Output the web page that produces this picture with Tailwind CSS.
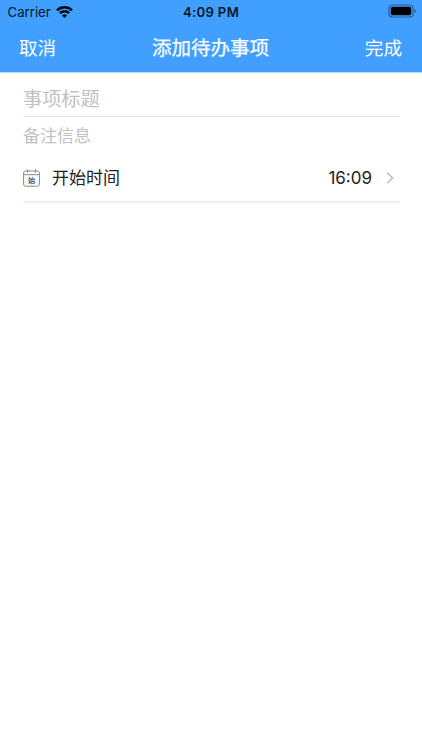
<!DOCTYPE html>
<html lang="zh-CN">
<head>
<meta charset="utf-8">
<title>添加待办事项</title>
<script src="https://cdn.jsdelivr.net/npm/@tailwindcss/browser@4"></script>
</head>
<body class="bg-white">
<div class="w-[422px] h-[750px] flex flex-col bg-white overflow-hidden font-['Inter','Noto_Sans_CJK_SC',sans-serif]">
  <header class="h-[73px] shrink-0 bg-[#409fff] border-b border-[#b5d8fb]">
    <div class="h-6 grid grid-cols-3 items-center text-[#07192b] leading-6">
      <div class="flex items-center pl-[7.5px] gap-[5px]">
        <span class="text-[13.2px]">Carrier</span>
        <svg class="w-[17px] h-[12px]" viewBox="0 0 17 12" fill="none" stroke="#00070f" stroke-width="2.5"><path d="M1 4.4a10.7 10.7 0 0 1 15 0M3.9 7.2a6.6 6.6 0 0 1 9.2 0"/><path d="M8.5 12 6 9.4a3.6 3.6 0 0 1 5 0Z" fill="#00070f" stroke="none"/></svg>
      </div>
      <div class="text-center text-[13.2px] font-semibold tracking-[0.3px]">4:09 PM</div>
      <div class="flex justify-end pr-[6px] pb-[2px]">
        <svg class="w-[28px] h-[14px]" viewBox="0 0 28 14"><rect x="1" y="1" width="24" height="12" rx="3.3" fill="none" stroke="#245f9b" stroke-width="1.2"/><rect x="2.8" y="2.8" width="20.4" height="8.4" rx="1.6" fill="#000"/><path d="M26.4 5v4c2-.8 2-3.2 0-4Z" fill="#245f9b"/></svg>
      </div>
    </div>
    <nav class="h-[48px] pt-[1px] pl-[19px] pr-[20px] flex items-center justify-between text-white text-[18.6px] leading-[47px]">
      <span>取消</span>
      <span class="text-[19.5px] [-webkit-text-stroke:0.25px_white]">添加待办事项</span>
      <span>完成</span>
    </nav>
  </header>
  <main class="pl-[23px] pr-[22px]">
    <div class="h-[44px] border-b border-[#e6e6e6] flex items-center pt-[10px] text-[19.2px] text-[#c1c1c3]">事项标题</div>
    <div class="h-[37px] pt-[2px] flex items-center text-[17px] text-[#c1c1c3]">备注信息</div>
    <div class="h-[49px] border-b-2 border-[#f0f0f0] flex items-center text-[17px] text-[#222]">
      <svg class="w-[17px] h-[18px]" viewBox="0 0 17 18" fill="none" stroke="#888" stroke-width="1"><rect x=".6" y="2" width="15.8" height="15.2" rx="2"/><path d="M.6 5.7h15.8M4.5.3v3.2M12.5.3v3.2"/><text x="8.5" y="14.2" text-anchor="middle" font-size="7.2" font-weight="500" font-family="Noto Sans CJK SC" fill="#333" stroke="none">始</text></svg>
      <span class="ml-[12px] pt-[3px]">开始时间</span>
      <span class="ml-auto pt-[2px] text-[17px]">16:09</span>
      <svg class="ml-[14px] mr-[6px] w-[8px] h-[12px]" viewBox="0 0 8 12" fill="none" stroke="#b5b5b5" stroke-width="1.3"><path d="M1.2.8 6.6 6l-5.4 5.2"/></svg>
    </div>
  </main>
</div>
</body>
</html>
